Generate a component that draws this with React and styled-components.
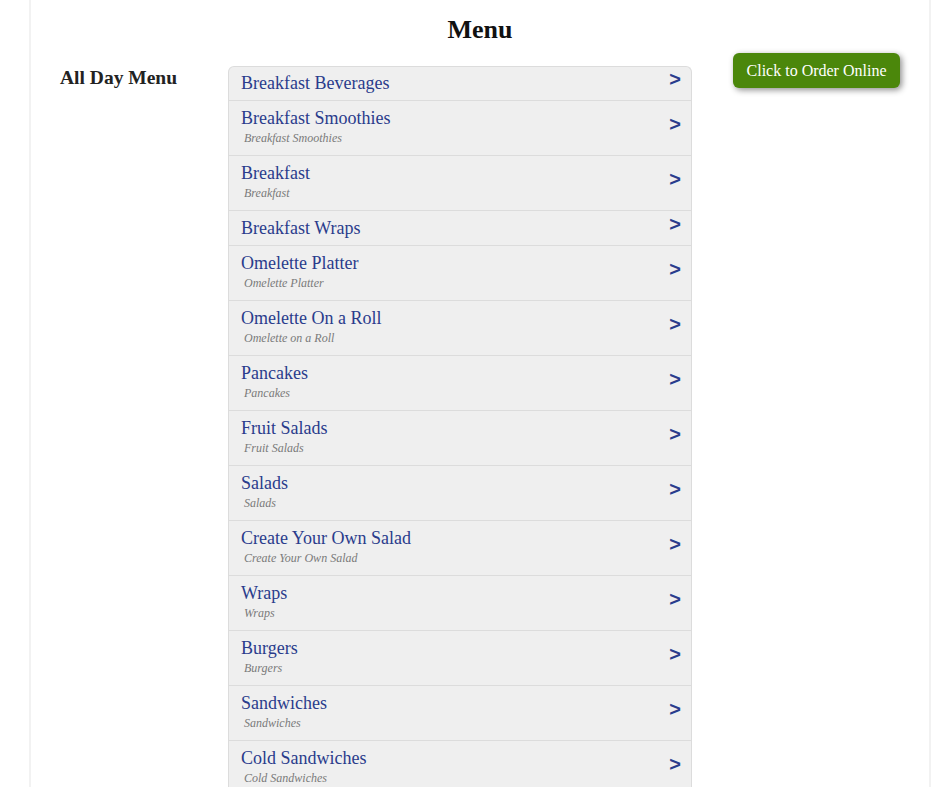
import React from "react";
import styled, { createGlobalStyle } from "styled-components";

const GlobalStyle = createGlobalStyle`
  html, body { margin: 0; padding: 0; background: #fff; }
  body { font-family: "Liberation Serif", "Times New Roman", serif; color: #222; }
`;

const Page = styled.div`
  margin-left: 29px;
  width: 898px;
  min-height: 787px;
  border-left: 2px solid #f2f2f2;
  border-right: 2px solid #f2f2f2;
  padding-top: 15px;
`;

const Title = styled.h1`
  margin: 0;
  font-size: 26px;
  line-height: 30px;
  font-weight: bold;
  text-align: center;
  color: #111;
`;

const Content = styled.div`
  display: flex;
  align-items: flex-start;
  margin-top: 8px;
  padding-left: 29px;
`;

const CategoryColumn = styled.div`
  width: 168px;
  padding-top: 13px;
`;

const CategoryName = styled.h2`
  margin: 0;
  font-size: 19.5px;
  line-height: 24px;
  font-weight: bold;
  color: #222;
`;

const List = styled.div`
  margin-top: 13px;
  width: 462px;
  background: #efefef;
  border: 1px solid #dcdcdc;
  border-bottom: none;
  border-radius: 6px 6px 0 0;
`;

const Row = styled.div`
  display: flex;
  align-items: center;
  padding: 6px 10px 6px 12px;
  border-top: 1px solid #dcdcdc;
  &:first-child { border-top: none; padding-top: 5px; padding-bottom: 6px; }
`;

const RowText = styled.div`
  flex: 1;
  display: flex;
  flex-direction: column;
`;

const RowTitle = styled.span`
  font-size: 18px;
  line-height: 22px;
  color: #2a3c8c;
`;

const RowSub = styled.span`
  font-size: 12px;
  line-height: 19px;
  font-style: italic;
  color: #7a7a7a;
  padding-left: 3px;
  margin-bottom: 1px;
`;

const Chevron = styled.span`
  font-family: "Liberation Sans", Arial, sans-serif;
  font-weight: bold;
  font-size: 20px;
  line-height: 20px;
  color: #2a3c8c;
  margin-top: -8px;
`;

const OrderColumn = styled.div`
  margin-left: 41px;
`;

const OrderButton = styled.button`
  font-family: "Liberation Serif", "Times New Roman", serif;
  font-size: 16px;
  line-height: 19px;
  color: #fff;
  background: #4b870b;
  border: none;
  border-radius: 6px;
  padding: 8px 12px;
  width: 167px;
  height: 35px;
  box-shadow: 2px 2px 6px rgba(0, 0, 0, 0.45);
  cursor: pointer;
`;

const items = [
  ["Breakfast Beverages", ""],
  ["Breakfast Smoothies", "Breakfast Smoothies"],
  ["Breakfast", "Breakfast"],
  ["Breakfast Wraps", ""],
  ["Omelette Platter", "Omelette Platter"],
  ["Omelette On a Roll", "Omelette on a Roll"],
  ["Pancakes", "Pancakes"],
  ["Fruit Salads", "Fruit Salads"],
  ["Salads", "Salads"],
  ["Create Your Own Salad", "Create Your Own Salad"],
  ["Wraps", "Wraps"],
  ["Burgers", "Burgers"],
  ["Sandwiches", "Sandwiches"],
  ["Cold Sandwiches", "Cold Sandwiches"],
  ["Hot Sandwiches", "Hot Sandwiches"],
];

export default function App() {
  return (
    <>
      <GlobalStyle />
      <Page>
        <Title>Menu</Title>
        <Content>
          <CategoryColumn>
            <CategoryName>All Day Menu</CategoryName>
          </CategoryColumn>
          <List>
            {items.map(([t, s]) => (
              <Row key={t}>
                <RowText>
                  <RowTitle>{t}</RowTitle>
                  {s && <RowSub>{s}</RowSub>}
                </RowText>
                <Chevron>&gt;</Chevron>
              </Row>
            ))}
          </List>
          <OrderColumn>
            <OrderButton>Click to Order Online</OrderButton>
          </OrderColumn>
        </Content>
      </Page>
    </>
  );
}
